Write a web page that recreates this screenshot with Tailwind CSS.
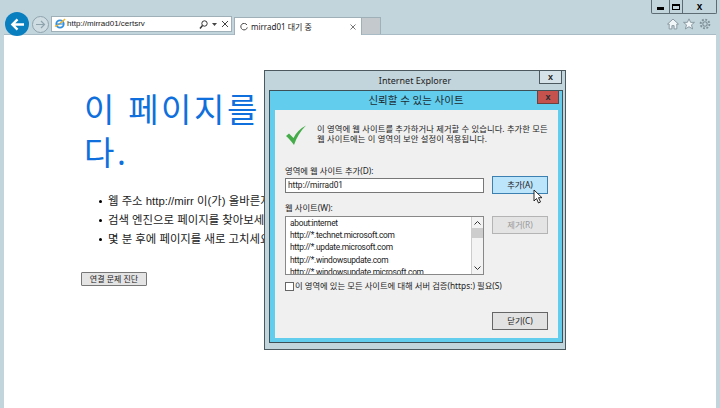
<!DOCTYPE html>
<html lang="ko">
<head>
<meta charset="UTF-8">
<script src="https://cdn.jsdelivr.net/npm/@tailwindcss/browser@4"></script>
</head>
<body class="relative w-[720px] h-[408px] overflow-hidden bg-[#c3d5dc] font-['Noto_Sans','Noto_Sans_CJK_KR',sans-serif] text-black">

<!-- window buttons -->
<div class="absolute right-[3px] top-0 flex h-[14px] border border-t-0 border-[#5d6b72] rounded-b-[2px]">
  <div class="w-[18px] flex items-center justify-center border-r border-[#5d6b72]"><div class="w-[7px] h-[3px] mt-[3px] bg-black"></div></div>
  <div class="w-[13px] flex items-center justify-center border-r border-[#5d6b72]"><div class="w-[8px] h-[6px] border border-t-2 border-black"></div></div>
  <div class="w-[33px] flex items-center justify-center text-[10px] font-bold leading-none font-['Liberation_Sans',sans-serif]">x</div>
</div>

<!-- toolbar -->
<div class="flex items-start h-[34px] pt-[12px] pl-[5px]">
  <div class="w-[24px] h-[24px] rounded-full bg-[#0a7fc0] flex items-center justify-center shrink-0">
    <svg width="15" height="13" viewBox="0 0 16 14" fill="none" stroke="#fff" stroke-width="2.6"><path d="M15 7H3M8 1.5 2.5 7 8 12.5"/></svg>
  </div>
  <div class="w-[17px] h-[17px] ml-[3px] mt-[4px] rounded-full border border-[#8fa3ad] bg-[#cfdde3] flex items-center justify-center shrink-0">
    <svg width="10" height="9" viewBox="0 0 10 9" fill="none" stroke="#8fa3ad" stroke-width="1.2"><path d="M0 4.500H8M5 1l3.500 3.500L5 8"/></svg>
  </div>
  <!-- address bar -->
  <div class="w-[181px] h-[16px] ml-[2px] mt-[4px] bg-white border border-[#9fb0b8] flex items-center pl-[2px] shrink-0">
    <svg width="12" height="12" viewBox="0 0 13 13" fill="none"><circle cx="6.500" cy="6.500" r="4" stroke="#2f8fe0" stroke-width="2"/><path d="M1 9C4 8 9 4 12 1" stroke="#f0b429" stroke-width="1.500"/><path d="M3 6.500H10" stroke="#2f8fe0" stroke-width="1.200"/></svg>
    <span class="ml-[1px] text-[8px] leading-none text-[#222] whitespace-nowrap font-['Liberation_Sans',sans-serif]">http://mirrad01/certsrv</span>
    <div class="ml-auto flex items-center gap-[4px] pr-[2px]">
      <svg width="9" height="9" viewBox="0 0 9 9" fill="none" stroke="#333" stroke-width="1"><circle cx="5.500" cy="3.500" r="2.700"/><path d="M3.500 5.500 1 8.500" stroke-width="1.400"/></svg>
      <svg width="5" height="3" viewBox="0 0 5 3"><path d="M0 0H5L2.500 3Z" fill="#444"/></svg>
      <svg width="8" height="8" viewBox="0 0 8 8" stroke="#444" stroke-width="1"><path d="M1 1 7 7M7 1 1 7"/></svg>
    </div>
  </div>
  <!-- tabs -->
  <div class="w-[128px] h-[18px] ml-[2px] mt-[5px] bg-white border border-b-0 border-[#9fb0b8] flex items-center pl-[5px] pr-[5px] shrink-0">
    <svg width="8" height="8" viewBox="0 0 9 9" fill="none" stroke="#444" stroke-width="1.100"><path d="M7.800 2.200A3.700 3.700 0 1 0 8.200 5"/></svg>
    <span class="ml-[3px] text-[8px] leading-none text-[#222] whitespace-nowrap">mirrad01 대기 중</span>
    <svg class="ml-auto" width="6" height="6" viewBox="0 0 6 6" stroke="#777" stroke-width="1"><path d="M0.500 0.500 5.500 5.500M5.500 0.500 0.500 5.500"/></svg>
  </div>
  <div class="w-[19px] h-[17px] mt-[5px] bg-[#c3c9cc] border border-l-0 border-b-0 border-[#9fb0b8] shrink-0"></div>
  <!-- home, favourites, settings -->
  <div class="ml-auto mr-[9px] mt-[6px] flex items-center gap-[4px]">
    <svg width="12" height="12" viewBox="0 0 11 11" fill="#f1f6f8" stroke="#7f9099" stroke-width="0.800"><path d="M5.500 1 10.500 5.500H9V10H6.500V7H4.500V10H2V5.500H0.500Z"/></svg>
    <svg width="12" height="12" viewBox="0 0 11 11" fill="#f1f6f8" stroke="#7f9099" stroke-width="0.800"><path d="M5.500 0.800 7 4H10.500L7.800 6.300 8.800 10 5.500 8 2.200 10 3.200 6.300 0.500 4H4Z"/></svg>
    <svg width="12" height="12" viewBox="0 0 11 11" fill="none" stroke="#7f9099"><circle cx="5.500" cy="5.500" r="2" stroke-width="1"/><circle cx="5.500" cy="5.500" r="4" stroke-width="1.800" stroke-dasharray="1.700 1.400"/></svg>
  </div>
</div>

<!-- page -->
<div class="mx-[4px] h-[374px] bg-white border-t border-[#a9bcc5] pl-[80px] pt-[53px]">
  <h1 class="w-[450px] text-[33px] leading-[43px] font-normal text-[#0f6fdc] tracking-[2.600px]">이 페이지를 표시할 수 없습니다.</h1>
  <ul class="mt-[18px] ml-[15px] text-[11.400px] leading-[19px] flex flex-col text-[#222] font-['Liberation_Sans','Noto_Sans_CJK_KR',sans-serif]">
    <li class="flex items-center whitespace-nowrap"><span class="w-[3px] h-[3px] mr-[6px] rounded-full bg-black shrink-0"></span>웹 주소 http://mirr 이(가) 올바른지 확인하세요.</li>
    <li class="flex items-center whitespace-nowrap"><span class="w-[3px] h-[3px] mr-[6px] rounded-full bg-black shrink-0"></span>검색 엔진으로 페이지를 찾아보세요.</li>
    <li class="flex items-center whitespace-nowrap"><span class="w-[3px] h-[3px] mr-[6px] rounded-full bg-black shrink-0"></span>몇 분 후에 페이지를 새로 고치세요.</li>
  </ul>
  <button class="mt-[23px] -ml-[3px] block w-[66px] h-[14px] bg-[#e4e4e4] border border-[#777] rounded-[1px] text-[8px] leading-none text-[#222]">연결 문제 진단</button>
</div>

<!-- Internet Explorer host window -->
<div class="absolute left-[264px] top-[70px] w-[302px] h-[280px] bg-[#c3d5dc] border border-[#4c5a60] flex flex-col">
  <div class="relative h-[19px] flex items-center justify-center text-[9px] leading-none text-[#222] shrink-0">
    Internet Explorer
    <div class="absolute right-[3px] top-0 w-[23px] h-[13px] bg-[#d5e2e7] border border-t-0 border-[#4c5a60] flex items-center justify-center text-[9px] font-bold font-['Liberation_Sans',sans-serif]">x</div>
  </div>
  <!-- trusted sites dialog -->
  <div class="ml-[4px] w-[294px] h-[253px] bg-[#62cdec] border border-[#3d4f57] flex flex-col shrink-0">
    <div class="relative h-[19px] flex items-center justify-center text-[10.500px] leading-none text-[#1c2c33] shrink-0">
      신뢰할 수 있는 사이트
      <div class="absolute right-[3px] top-0 w-[22px] h-[13px] bg-[#c5524c] border border-t-0 border-[#70403c] flex items-center justify-center text-[9px] font-bold font-['Liberation_Sans',sans-serif]">x</div>
    </div>
    <div class="ml-[5px] w-[283px] h-[228px] bg-[#f0f0f0] pl-[10px] pr-[10px] pt-[12px] text-[8.300px] text-[#222]">
      <div class="flex items-start">
        <svg class="mt-[2px] shrink-0" width="22" height="22" viewBox="0 0 22 22"><path d="M1 12 4 9.500 8.500 14C11 9 15 4.500 21 1.500 15.500 7 11.500 13.500 9 21 6.500 17.500 4 14.500 1 12Z" fill="#44ad4a"/></svg>
        <p class="ml-[10px] mt-[2px] leading-[10px] whitespace-nowrap tracking-[0.080px]">이 영역에 웹 사이트를 추가하거나 제거할 수 있습니다. 추가한 모든<br>웹 사이트에는 이 영역의 보안 설정이 적용됩니다.</p>
      </div>
      <div class="mt-[19px] leading-[11px]">영역에 웹 사이트 추가(D):</div>
      <div class="flex items-center">
        <div class="w-[199px] h-[15px] bg-white border border-[#777] px-[2px] flex items-center leading-none font-['Roboto',sans-serif] text-[8.400px] tracking-[-0.100px]">http://mirrad01</div>
        <button class="relative ml-[8px] w-[56px] h-[18px] bg-[#bce4fa] border border-[#3c7fb1] text-[8.300px] leading-none">추가(A)
          <svg class="absolute left-[40px] top-[12px]" width="11" height="15" viewBox="0 0 11 15"><path d="M1 1V12L3.500 9.500 5.500 14 7.500 13 5.500 8.700H9Z" fill="#fff" stroke="#111" stroke-width="0.900"/></svg>
        </button>
      </div>
      <div class="mt-[8px] leading-[11px]">웹 사이트(W):</div>
      <div class="mt-[3px] flex items-start">
        <div class="w-[199px] h-[59px] bg-white border border-[#888] overflow-hidden flex">
          <ul class="flex-1 pl-[4px] text-[8.400px] tracking-[-0.300px] leading-[12.200px] whitespace-nowrap overflow-hidden font-['Roboto',sans-serif]">
            <li>about:internet</li>
            <li>http://*.technet.microsoft.com</li>
            <li>http://*.update.microsoft.com</li>
            <li>http://*.windowsupdate.com</li>
            <li>http://*.windowsupdate.microsoft.com</li>
          </ul>
          <div class="w-[12px] border-l border-[#ccc] bg-[#f3f3f3] flex flex-col items-center justify-between relative">
            <svg class="mt-[4px]" width="7" height="4" viewBox="0 0 7 4" fill="none" stroke="#333"><path d="M0.500 3.500 3.500 0.500 6.500 3.500"/></svg>
            <div class="absolute top-[11px] left-0 w-[11px] h-[10px] bg-[#cdcdcd]"></div>
            <svg class="mb-[4px]" width="7" height="4" viewBox="0 0 7 4" fill="none" stroke="#333"><path d="M0.500 0.500 3.500 3.500 6.500 0.500"/></svg>
          </div>
        </div>
        <button class="ml-[8px] w-[56px] h-[18px] bg-[#e4e4e4] border border-[#b4b4b4] text-[8.300px] leading-none text-[#999]">제거(R)</button>
      </div>
      <label class="mt-[7px] flex items-center leading-none">
        <span class="w-[9px] h-[9px] bg-white border border-[#666] shrink-0"></span>
        <span class="ml-[1px] whitespace-nowrap">이 영역에 있는 모든 사이트에 대해 서버 검증(https:) 필요(S)</span>
      </label>
      <div class="mt-[21px] flex justify-end">
        <button class="w-[56px] h-[18px] bg-[#e2e2e2] border border-[#666] text-[8.300px] leading-none">닫기(C)</button>
      </div>
    </div>
  </div>
</div>
</body>
</html>
